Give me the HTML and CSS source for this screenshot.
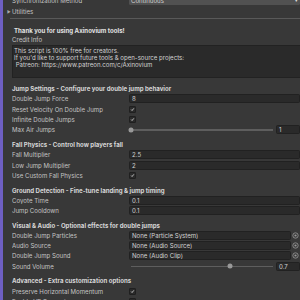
FILE: index.html
```html
<!DOCTYPE html>
<html lang="en">
<head>
<meta charset="UTF-8" />
<meta name="viewport" content="width=device-width, initial-scale=1" />
<title>Double Jump Inspector</title>
<link rel="stylesheet" href="styles.css">
</head>
<body>
<div class="edge"></div>
<div class="inspector">
  <div class="row top">
    <span class="label">Synchronization Method</span>
    <div class="dropdown">Continuous<span class="arrow">&#9662;</span></div>
  </div>
  <div class="foldout"><span class="tri">&#9654;</span>Utilities</div>
  <div class="divider"></div>
  <div class="thanks">Thank you for using Axinovium tools!</div>
  <div class="credit-label">Credit Info</div>
  <div class="credit">This script is 100% free for creators.<br>If you'd like to support future tools &amp; open-source projects:<br>&nbsp;Patreon: https://www.patreon.com/c/Axinovium</div>

  <div class="section first">
    <div class="header">Jump Settings - Configure your double jump behavior</div>
    <div class="row"><span class="label">Double Jump Force</span><div class="field">8</div></div>
    <div class="row"><span class="label">Reset Velocity On Double Jump</span><span class="check"><svg viewBox="0 0 7 7"><path d="M1.6 3.6 L2.9 4.9 L5.4 1.9" /></svg></span></div>
    <div class="row"><span class="label">Infinite Double Jumps</span><span class="check"><svg viewBox="0 0 7 7"><path d="M1.6 3.6 L2.9 4.9 L5.4 1.9" /></svg></span></div>
    <div class="row"><span class="label">Max Air Jumps</span>
      <div class="slider"><div class="track"><span class="knob" style="left: 0%"></span></div><div class="field num">1</div></div>
    </div>
  </div>

  <div class="section">
    <div class="header">Fall Physics - Control how players fall</div>
    <div class="row"><span class="label">Fall Multiplier</span><div class="field">2.5</div></div>
    <div class="row"><span class="label">Low Jump Multiplier</span><div class="field">2</div></div>
    <div class="row"><span class="label">Use Custom Fall Physics</span><span class="check"><svg viewBox="0 0 7 7"><path d="M1.6 3.6 L2.9 4.9 L5.4 1.9" /></svg></span></div>
  </div>

  <div class="section">
    <div class="header">Ground Detection - Fine-tune landing &amp; jump timing</div>
    <div class="row"><span class="label">Coyote Time</span><div class="field">0.1</div></div>
    <div class="row"><span class="label">Jump Cooldown</span><div class="field">0.1</div></div>
  </div>

  <div class="section">
    <div class="header">Visual &amp; Audio - Optional effects for double jumps</div>
    <div class="row"><span class="label">Double Jump Particles</span>
      <div class="object"><div class="field">None (Particle System)</div><svg class="picker" viewBox="0 0 7 7"><circle cx="3.5" cy="3.5" r="2.7" /><circle class="dot" cx="3.5" cy="3.5" r="1.1" /></svg></div>
    </div>
    <div class="row"><span class="label">Audio Source</span>
      <div class="object"><div class="field">None (Audio Source)</div><svg class="picker" viewBox="0 0 7 7"><circle cx="3.5" cy="3.5" r="2.7" /><circle class="dot" cx="3.5" cy="3.5" r="1.1" /></svg></div>
    </div>
    <div class="row"><span class="label">Double Jump Sound</span>
      <div class="object"><div class="field">None (Audio Clip)</div><svg class="picker" viewBox="0 0 7 7"><circle cx="3.5" cy="3.5" r="2.7" /><circle class="dot" cx="3.5" cy="3.5" r="1.1" /></svg></div>
    </div>
    <div class="row"><span class="label">Sound Volume</span>
      <div class="slider"><div class="track"><span class="knob" style="left: 70%"></span></div><div class="field num">0.7</div></div>
    </div>
  </div>

  <div class="section">
    <div class="header">Advanced - Extra customization options</div>
    <div class="row"><span class="label">Preserve Horizontal Momentum</span><span class="check"><svg viewBox="0 0 7 7"><path d="M1.6 3.6 L2.9 4.9 L5.4 1.9" /></svg></span></div>
    <div class="row"><span class="label">Enable VR Support</span><span class="check"><svg viewBox="0 0 7 7"><path d="M1.6 3.6 L2.9 4.9 L5.4 1.9" /></svg></span></div>
  </div>
</div>
</body>
</html>
```

FILE: styles.css
```css
body { margin: 0; height: 300px; overflow: hidden; display: flex; background: #383838; color: #c4c4c4; font-family: Inter, "Noto Sans", sans-serif; font-size: 6.1px; }
.edge { flex: none; width: 3px; background: #6e5fc2; }
.inspector { flex: 1; min-width: 0; padding-left: 9px; margin-top: -4.7px; }

.row { display: flex; align-items: center; height: 10.34px; }
.label { flex: none; width: 117px; white-space: nowrap; overflow: hidden; }
.field { flex: 1; min-width: 0; box-sizing: border-box; height: 9px; line-height: 7px; padding-left: 2px; background: #2a2a2a; border: 1px solid #212121; border-radius: 1.5px; color: #d2d2d2; white-space: nowrap; overflow: hidden; }

.dropdown { flex: 1; display: flex; justify-content: space-between; box-sizing: border-box; height: 9px; line-height: 9px; padding: 0 2px; background: #515151; border-radius: 1.5px; color: #d2d2d2; }
.arrow { font-size: 5px; color: #e0e0e0; }

.foldout { height: 10.34px; line-height: 10.34px; margin-top: 1px; color: #c4c4c4; }
.tri { display: inline-block; width: 5px; margin-left: -5px; font-size: 4px; color: #a8a8a8; vertical-align: top; }
.divider { height: 1px; margin: 1px 0 0 -2px; background: #595959; }

.thanks { height: 10px; line-height: 10px; margin-top: 7px; padding-left: 2px; font-weight: bold; color: #e2e2e2; }
.credit-label { height: 8px; line-height: 8px; }
.credit { box-sizing: border-box; height: 33px; margin-top: 1px; padding: 1.5px 0 0 1px; line-height: 7px; background: #2a2a2a; border: 1px solid #222; border-right: none; color: #d2d2d2; white-space: nowrap; overflow: hidden; }

.section { margin-top: 5px; }
.section.first { margin-top: 6.25px; }
.header { height: 9.5px; line-height: 9.5px; font-weight: bold; color: #d6d6d6; white-space: nowrap; }

.check { display: flex; box-sizing: border-box; width: 7px; height: 7px; background: #2a2a2a; border: 1px solid #1f1f1f; border-radius: 1px; }
.check svg { width: 100%; height: 100%; fill: none; stroke: #e8e8e8; stroke-width: 1.1; }

.slider { flex: 1; display: flex; align-items: center; gap: 3px; }
.track { flex: 1; position: relative; height: 1.5px; margin-left: 2px; background: #5e5e5e; }
.knob { position: absolute; top: 50%; width: 5px; height: 5px; border-radius: 50%; background: #999; transform: translate(-50%, -50%); }
.field.num { flex: none; width: 24px; }

.object { flex: 1; min-width: 0; display: flex; align-items: center; gap: 1px; }
.picker { flex: none; width: 7px; height: 7px; margin-right: 1px; fill: none; stroke: #9a9a9a; stroke-width: 0.8; }
.picker .dot { fill: #9a9a9a; stroke: none; }
```
